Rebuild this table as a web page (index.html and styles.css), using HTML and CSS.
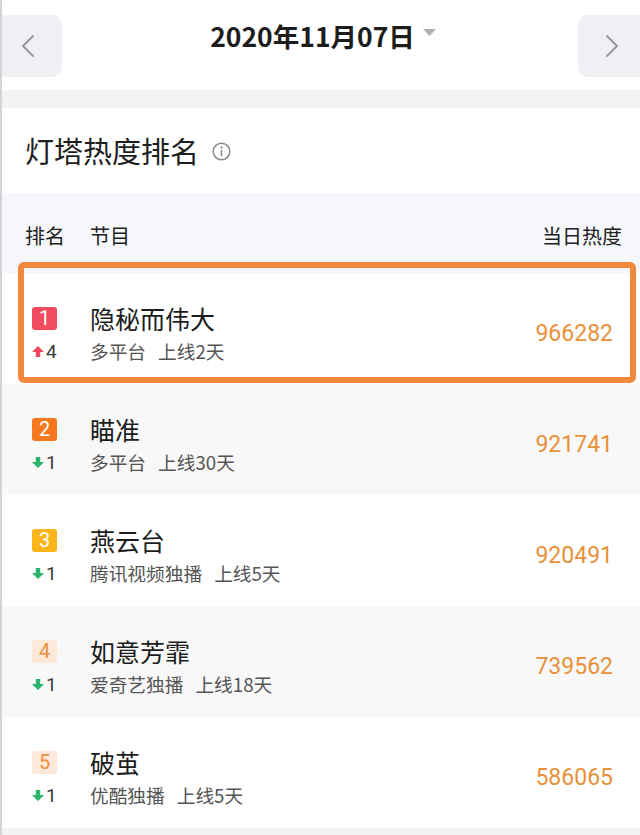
FILE: index.html
```html
<!DOCTYPE html>
<html lang="zh-CN">
<head>
<meta charset="utf-8">
<title>灯塔热度排名</title>
<link rel="stylesheet" href="styles.css">
</head>
<body>
<div class="page">
  <header class="topbar">
    <button class="nav-btn nav-prev" aria-label="前一天">
      <svg width="16" height="24" viewBox="0 0 16 24"><path d="M13 2 L3 12 L13 22" fill="none" stroke="#9a9a9a" stroke-width="2" stroke-linecap="round" stroke-linejoin="round"/></svg>
    </button>
    <div class="date">
      <span class="date-text">2020年11月07日</span>
      <svg class="caret" width="13" height="7" viewBox="0 0 13 7"><path d="M0 0 H13 L6.5 7 Z" fill="#b0b0b0"/></svg>
    </div>
    <button class="nav-btn nav-next" aria-label="后一天">
      <svg width="16" height="24" viewBox="0 0 16 24"><path d="M3 2 L13 12 L3 22" fill="none" stroke="#9a9a9a" stroke-width="2" stroke-linecap="round" stroke-linejoin="round"/></svg>
    </button>
  </header>
  <div class="spacer"></div>
  <section class="card">
    <div class="card-title">
      <h1>灯塔热度排名</h1>
      <svg class="info" width="19" height="19" viewBox="0 0 19 19"><circle cx="9.5" cy="9.5" r="8.3" fill="none" stroke="#8a8a8a" stroke-width="1.5"/><circle cx="9.5" cy="5.6" r="1.1" fill="#8a8a8a"/><rect x="8.7" y="8" width="1.6" height="6" rx="0.5" fill="#8a8a8a"/></svg>
    </div>
    <div class="thead">
      <span class="th-rank">排名</span>
      <span class="th-name">节目</span>
      <span class="th-heat">当日热度</span>
    </div>
    <ol class="list">
      <li class="row row-white highlighted">
        <div class="info-grid">
          <span class="badge b1">1</span>
          <span class="title">隐秘而伟大</span>
          <span class="trend up"><svg width="12" height="11" viewBox="0 0 12 11"><path d="M6 0 L12 6 H8.2 V11 H3.8 V6 H0 Z" fill="#f0475a"/></svg>4</span>
          <span class="meta">多平台<span class="days">上线2天</span></span>
        </div>
        <span class="heat">966282</span>
        <div class="mark"></div>
      </li>
      <li class="row row-gray">
        <div class="info-grid">
          <span class="badge b2">2</span>
          <span class="title">瞄准</span>
          <span class="trend down"><svg width="12" height="11" viewBox="0 0 12 11"><path d="M6 11 L12 5 H8.2 V0 H3.8 V5 H0 Z" fill="#2bb46c"/></svg>1</span>
          <span class="meta">多平台<span class="days">上线30天</span></span>
        </div>
        <span class="heat">921741</span>
      </li>
      <li class="row row-white">
        <div class="info-grid">
          <span class="badge b3">3</span>
          <span class="title">燕云台</span>
          <span class="trend down"><svg width="12" height="11" viewBox="0 0 12 11"><path d="M6 11 L12 5 H8.2 V0 H3.8 V5 H0 Z" fill="#2bb46c"/></svg>1</span>
          <span class="meta">腾讯视频独播<span class="days">上线5天</span></span>
        </div>
        <span class="heat">920491</span>
      </li>
      <li class="row row-gray">
        <div class="info-grid">
          <span class="badge b4">4</span>
          <span class="title">如意芳霏</span>
          <span class="trend down"><svg width="12" height="11" viewBox="0 0 12 11"><path d="M6 11 L12 5 H8.2 V0 H3.8 V5 H0 Z" fill="#2bb46c"/></svg>1</span>
          <span class="meta">爱奇艺独播<span class="days">上线18天</span></span>
        </div>
        <span class="heat">739562</span>
      </li>
      <li class="row row-white">
        <div class="info-grid">
          <span class="badge b4">5</span>
          <span class="title">破茧</span>
          <span class="trend down"><svg width="12" height="11" viewBox="0 0 12 11"><path d="M6 11 L12 5 H8.2 V0 H3.8 V5 H0 Z" fill="#2bb46c"/></svg>1</span>
          <span class="meta">优酷独播<span class="days">上线5天</span></span>
        </div>
        <span class="heat">586065</span>
      </li>
    </ol>
  </section>
</div>
</body>
</html>
```
FILE: styles.css
```css
* { box-sizing: border-box; }
html, body { margin: 0; padding: 0; }
body {
  background: #f3f3f3;
  font-family: "Noto Sans CJK SC", "Noto Sans", sans-serif;
  color: #222;
}
.page {
  width: 640px;
  min-height: 835px;
  border-left: 2px solid #d4d4d4;
  background: #f3f3f3;
}
.topbar {
  height: 90px;
  background: #fff;
  display: flex;
  align-items: flex-start;
  justify-content: space-between;
  padding-top: 15px;
}
.nav-btn {
  width: 60px;
  height: 62px;
  border: 0;
  padding: 0;
  background: #eef0f3;
  display: flex;
  align-items: center;
  justify-content: center;
}
.nav-prev { border-radius: 0 10px 10px 0; padding-right: 8px; }
.nav-next { border-radius: 10px 0 0 10px; width: 62px; padding-left: 6px; }
.date {
  display: flex;
  align-items: center;
  gap: 8px;
  margin-top: 4px;
  padding-left: 6px;
}
.date-text {
  font-size: 26.5px;
  font-weight: 700;
  line-height: 34px;
  color: #1c1c1c;
}
.caret { margin-top: -8px; }
.spacer { height: 18px; background: #f3f3f3; }
.card { background: #fff; }
.card-title {
  height: 85px;
  display: flex;
  align-items: center;
  padding-left: 23px;
  gap: 13px;
}
.card-title h1 {
  margin: 0;
  font-size: 29px;
  font-weight: 400;
  color: #1e1e1e;
  line-height: 1;
}
.info { margin-top: 2px; }
.thead {
  height: 80px;
  background: #f5f7fa;
  display: flex;
  align-items: center;
  padding: 4px 18px 0 23px;
  font-size: 20px;
  color: #222;
}
.th-rank { width: 65px; }
.th-name { flex: 1; }
.list { list-style: none; margin: 0; padding: 0; }
.row {
  height: 111px;
  display: flex;
  align-items: flex-start;
  justify-content: space-between;
  padding: 33px 27px 0 30px;
  position: relative;
}
.row-white { background: #fff; }
.row-gray { background: #f8f8f8; }
.info-grid {
  display: grid;
  grid-template-columns: 58px auto;
  grid-template-rows: 24px 20px;
  row-gap: 11px;
  align-items: center;
}
.badge {
  width: 25px;
  height: 23px;
  border-radius: 3px;
  display: flex;
  align-items: center;
  justify-content: center;
  font-family: "Roboto", "Noto Sans", sans-serif;
  font-size: 20px;
  color: #fff;
}
.b1 { background: #f14b5d; }
.b2 { background: #f5781f; }
.b3 { background: #fbb41a; }
.b4 { background: #fde8da; color: #e9913c; }
.title {
  font-size: 25px;
  line-height: 24px;
  color: #1c1c1c;
}
.trend {
  display: flex;
  align-items: center;
  gap: 2px;
  font-family: "Roboto", "Noto Sans", sans-serif;
  font-size: 19px;
  color: #3a3a3a;
}
.meta {
  font-size: 18.7px;
  line-height: 20px;
  color: #555;
}
.days { margin-left: 12px; }
.heat {
  margin-top: 14px;
  font-family: "Roboto", "Noto Sans", sans-serif;
  font-size: 23px;
  line-height: 28px;
  color: #e8913a;
}
.mark {
  position: absolute;
  left: 16px;
  right: 4px;
  top: -11px;
  bottom: 1px;
  border: 6px solid #f0893b;
  border-radius: 6px;
  pointer-events: none;
}
```
